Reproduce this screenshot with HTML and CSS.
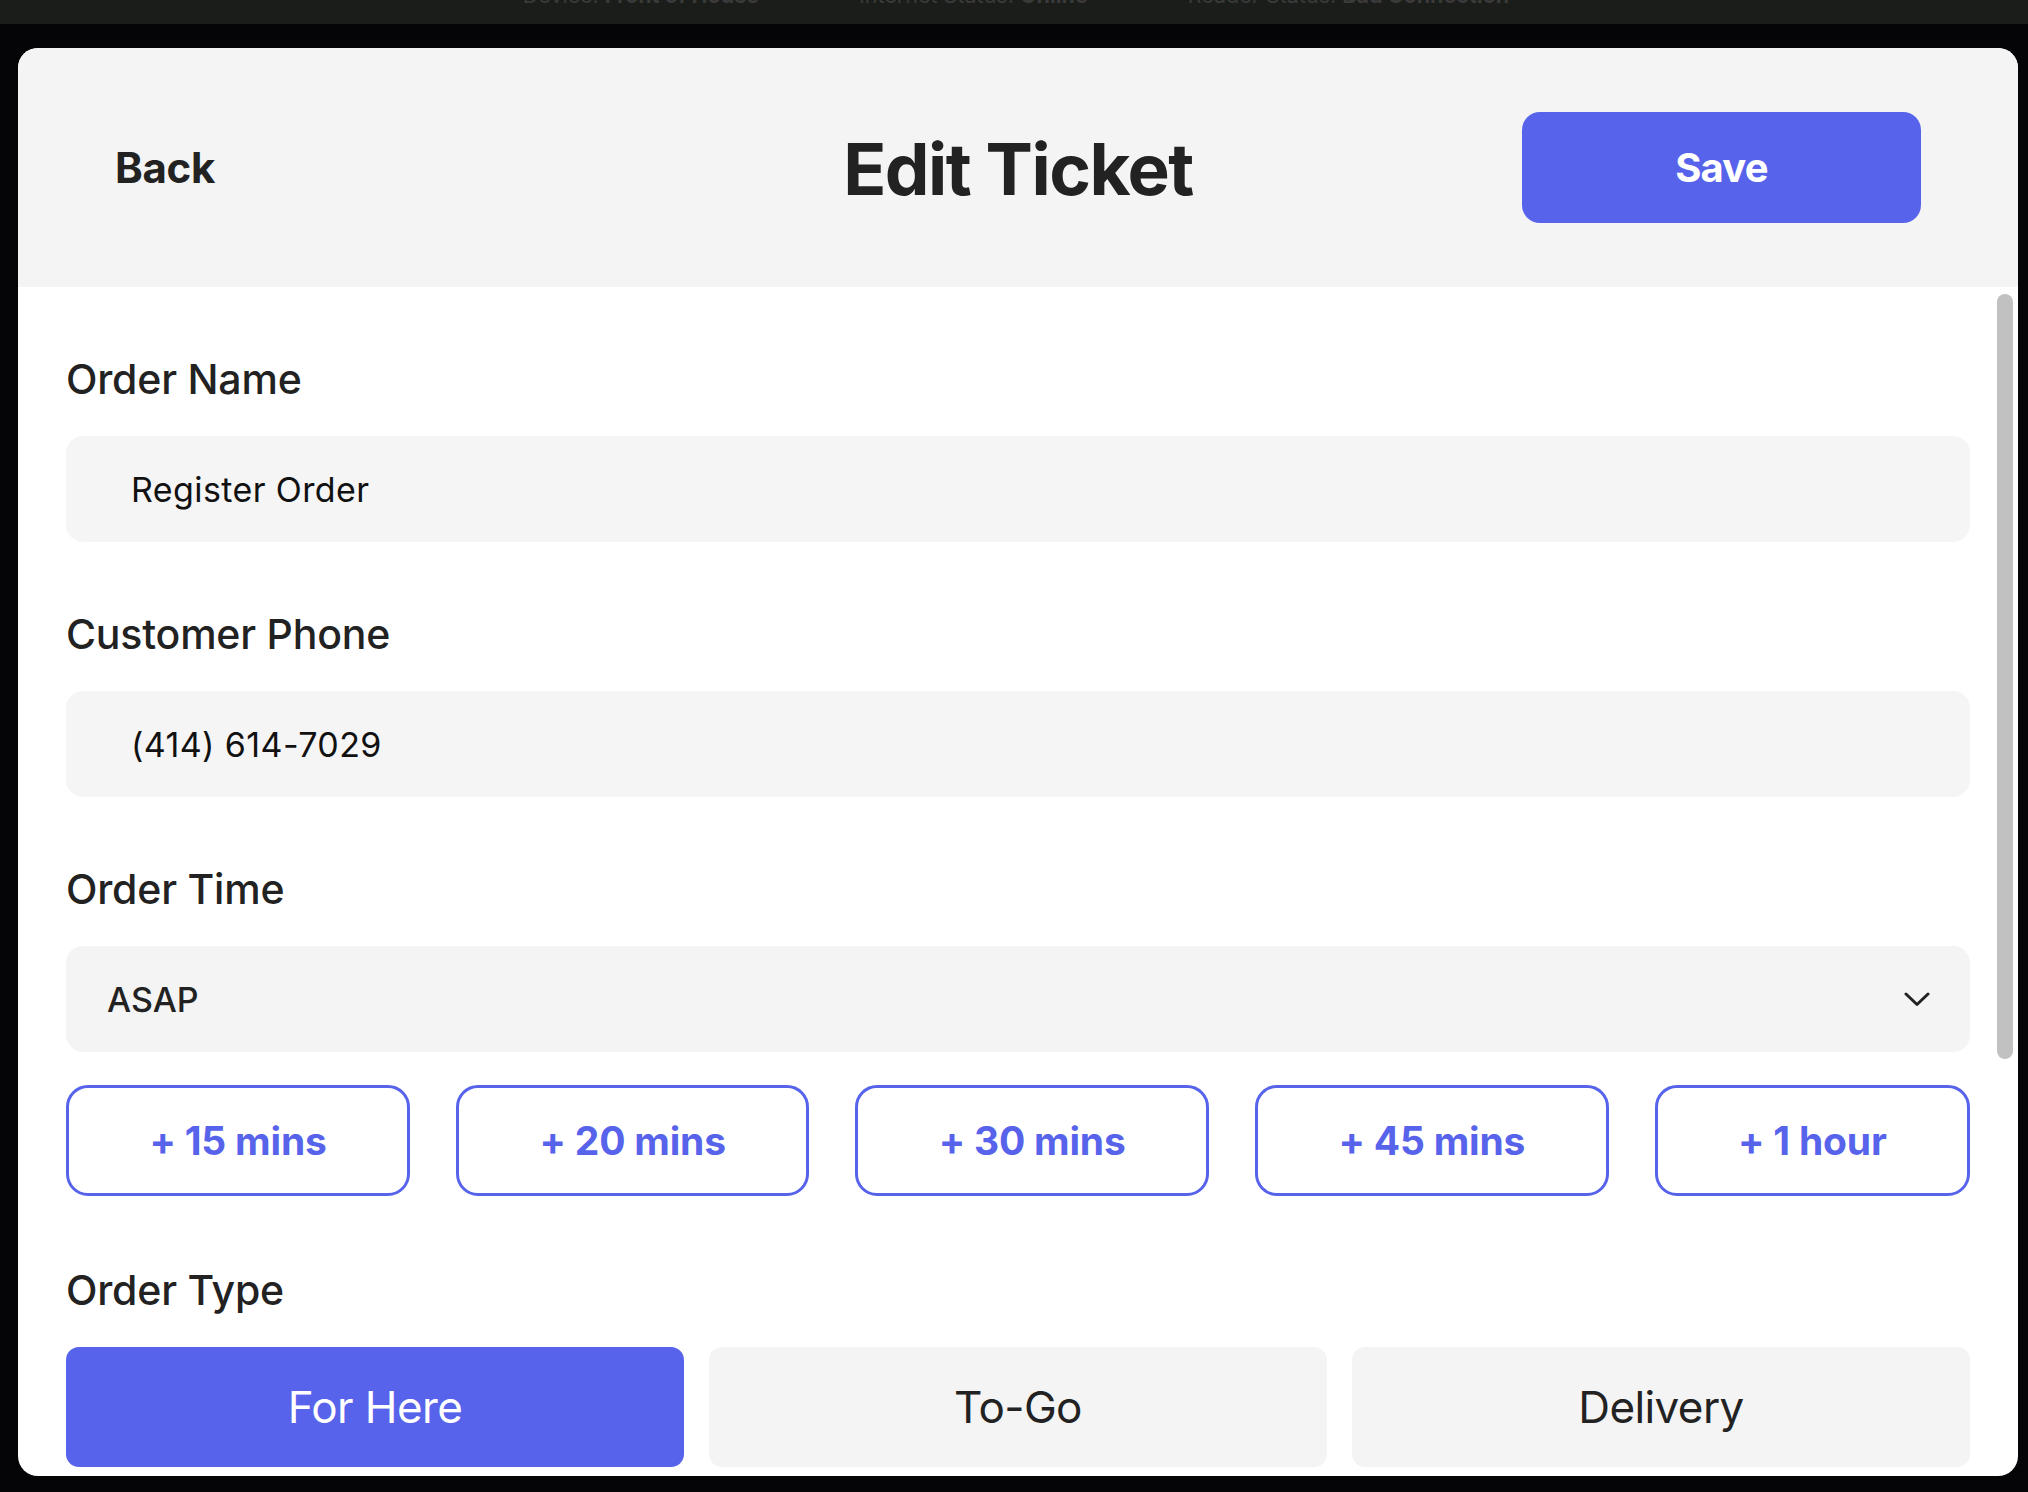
FILE: index.html
```html
<!DOCTYPE html>
<html lang="en">
<head>
<meta charset="utf-8">
<title>Edit Ticket</title>
<link rel="stylesheet" href="styles.css">
</head>
<body>
<div class="status">
  <div class="status-row">
    <span>Device: <b>Front of House</b></span>
    <span>Internet Status: <b>Online</b></span>
    <span>Reader Status: <b>Bad Connection</b></span>
  </div>
</div>
<div class="stage">
  <div class="card">
    <header class="topbar">
      <button class="back" type="button">Back</button>
      <h1 class="title">Edit Ticket</h1>
      <button class="save" type="button">Save</button>
    </header>
    <div class="body">
      <div class="form">
        <div class="field">
          <div class="label">Order Name</div>
          <div class="input">Register Order</div>
        </div>
        <div class="field">
          <div class="label">Customer Phone</div>
          <div class="input">(414) 614-7029</div>
        </div>
        <div class="field">
          <div class="label">Order Time</div>
          <div class="select">
            <span>ASAP</span>
            <svg class="chevron" width="26" height="15" viewBox="0 0 26 15" aria-hidden="true"><polyline points="2,2 13,12.5 24,2" fill="none" stroke="#222" stroke-width="3" stroke-linecap="round" stroke-linejoin="round"/></svg>
          </div>
          <div class="quick">
            <button class="quick-btn" type="button">+ 15 mins</button>
            <button class="quick-btn" type="button">+ 20 mins</button>
            <button class="quick-btn" type="button">+ 30 mins</button>
            <button class="quick-btn" type="button">+ 45 mins</button>
            <button class="quick-btn" type="button">+ 1 hour</button>
          </div>
        </div>
        <div class="field field-type">
          <div class="label">Order Type</div>
          <div class="types">
            <button class="type active" type="button">For Here</button>
            <button class="type" type="button">To-Go</button>
            <button class="type" type="button">Delivery</button>
          </div>
        </div>
      </div>
      <div class="scroll-thumb"></div>
    </div>
  </div>
</div>
</body>
</html>
```
FILE: styles.css
```css
* { box-sizing: border-box; }

html, body {
  margin: 0;
  padding: 0;
  height: 100%;
}

body {
  background: #050507;
  font-family: Inter, "Noto Sans", "Liberation Sans", sans-serif;
  overflow: hidden;
}

button {
  font-family: inherit;
  border: none;
  cursor: pointer;
}

.status {
  height: 24px;
  background: #1b1d1b;
  overflow: hidden;
}

.status-row {
  display: flex;
  justify-content: center;
  gap: 100px;
  margin-top: -17px;
  font-size: 21.5px;
  line-height: 24px;
  color: #3a3a3a;
  padding-left: 4px;
}

.status-row b { font-weight: 700; }

.stage {
  padding: 24px 10px 16px 18px;
}

.card {
  height: 1428px;
  background: #ffffff;
  border-radius: 20px;
  overflow: hidden;
  display: flex;
  flex-direction: column;
}

.topbar {
  height: 239px;
  flex: none;
  background: #f4f4f4;
  display: grid;
  grid-template-columns: 1fr auto 1fr;
  align-items: center;
  padding: 0 97px;
}

.back {
  justify-self: start;
  background: none;
  padding: 0;
  font-size: 42px;
  font-weight: 700;
  color: #222222;
  letter-spacing: -0.3px;
}

.title {
  margin: 4px 0 0;
  font-size: 71px;
  font-weight: 700;
  color: #222222;
  letter-spacing: -1.5px;
  line-height: 1;
}

.save {
  justify-self: end;
  width: 399px;
  height: 111px;
  border-radius: 18px;
  background: #5763eb;
  color: #ffffff;
  font-size: 40px;
  font-weight: 700;
  letter-spacing: -0.8px;
  margin-top: 0;
}

.body {
  flex: 1;
  position: relative;
  overflow: hidden;
}

.form {
  padding: 68px 48px 40px;
  display: flex;
  flex-direction: column;
  gap: 68px;
}

.field {
  display: flex;
  flex-direction: column;
}

.field-type { margin-top: 2px; }

.label {
  font-size: 41px;
  line-height: 48px;
  font-weight: 500;
  color: #222222;
  letter-spacing: -0.2px;
  margin-bottom: 33px;
}

.input {
  height: 106px;
  background: #f5f5f5;
  border-radius: 17px;
  display: flex;
  align-items: center;
  padding-left: 65px;
  font-size: 34px;
  letter-spacing: 0.4px;
  color: #111111;
}

.select {
  height: 106px;
  background: #f4f4f4;
  border-radius: 17px;
  display: flex;
  align-items: center;
  justify-content: space-between;
  padding: 0 40px 0 41px;
  font-size: 34px;
  font-weight: 500;
  color: #222222;
}

.chevron { display: block; }

.quick {
  display: flex;
  gap: 46px;
  margin-top: 33px;
}

.quick-btn {
  flex: 1 1 auto;
  height: 111px;
  padding: 0;
  border: 3px solid #5763eb;
  border-radius: 22px;
  background: #ffffff;
  color: #5763eb;
  font-size: 39px;
  font-weight: 700;
  letter-spacing: -0.2px;
}

.types {
  display: grid;
  grid-template-columns: repeat(3, 1fr);
  gap: 25px;
}

.type {
  height: 120px;
  border-radius: 13px;
  background: #f4f4f4;
  color: #222222;
  font-size: 44px;
  font-weight: 400;
  letter-spacing: -0.6px;
}

.type.active {
  background: #5763eb;
  color: #ffffff;
}

.scroll-thumb {
  position: absolute;
  top: 7px;
  right: 5px;
  width: 16px;
  height: 765px;
  border-radius: 8px;
  background: #c1c1c1;
}
```
